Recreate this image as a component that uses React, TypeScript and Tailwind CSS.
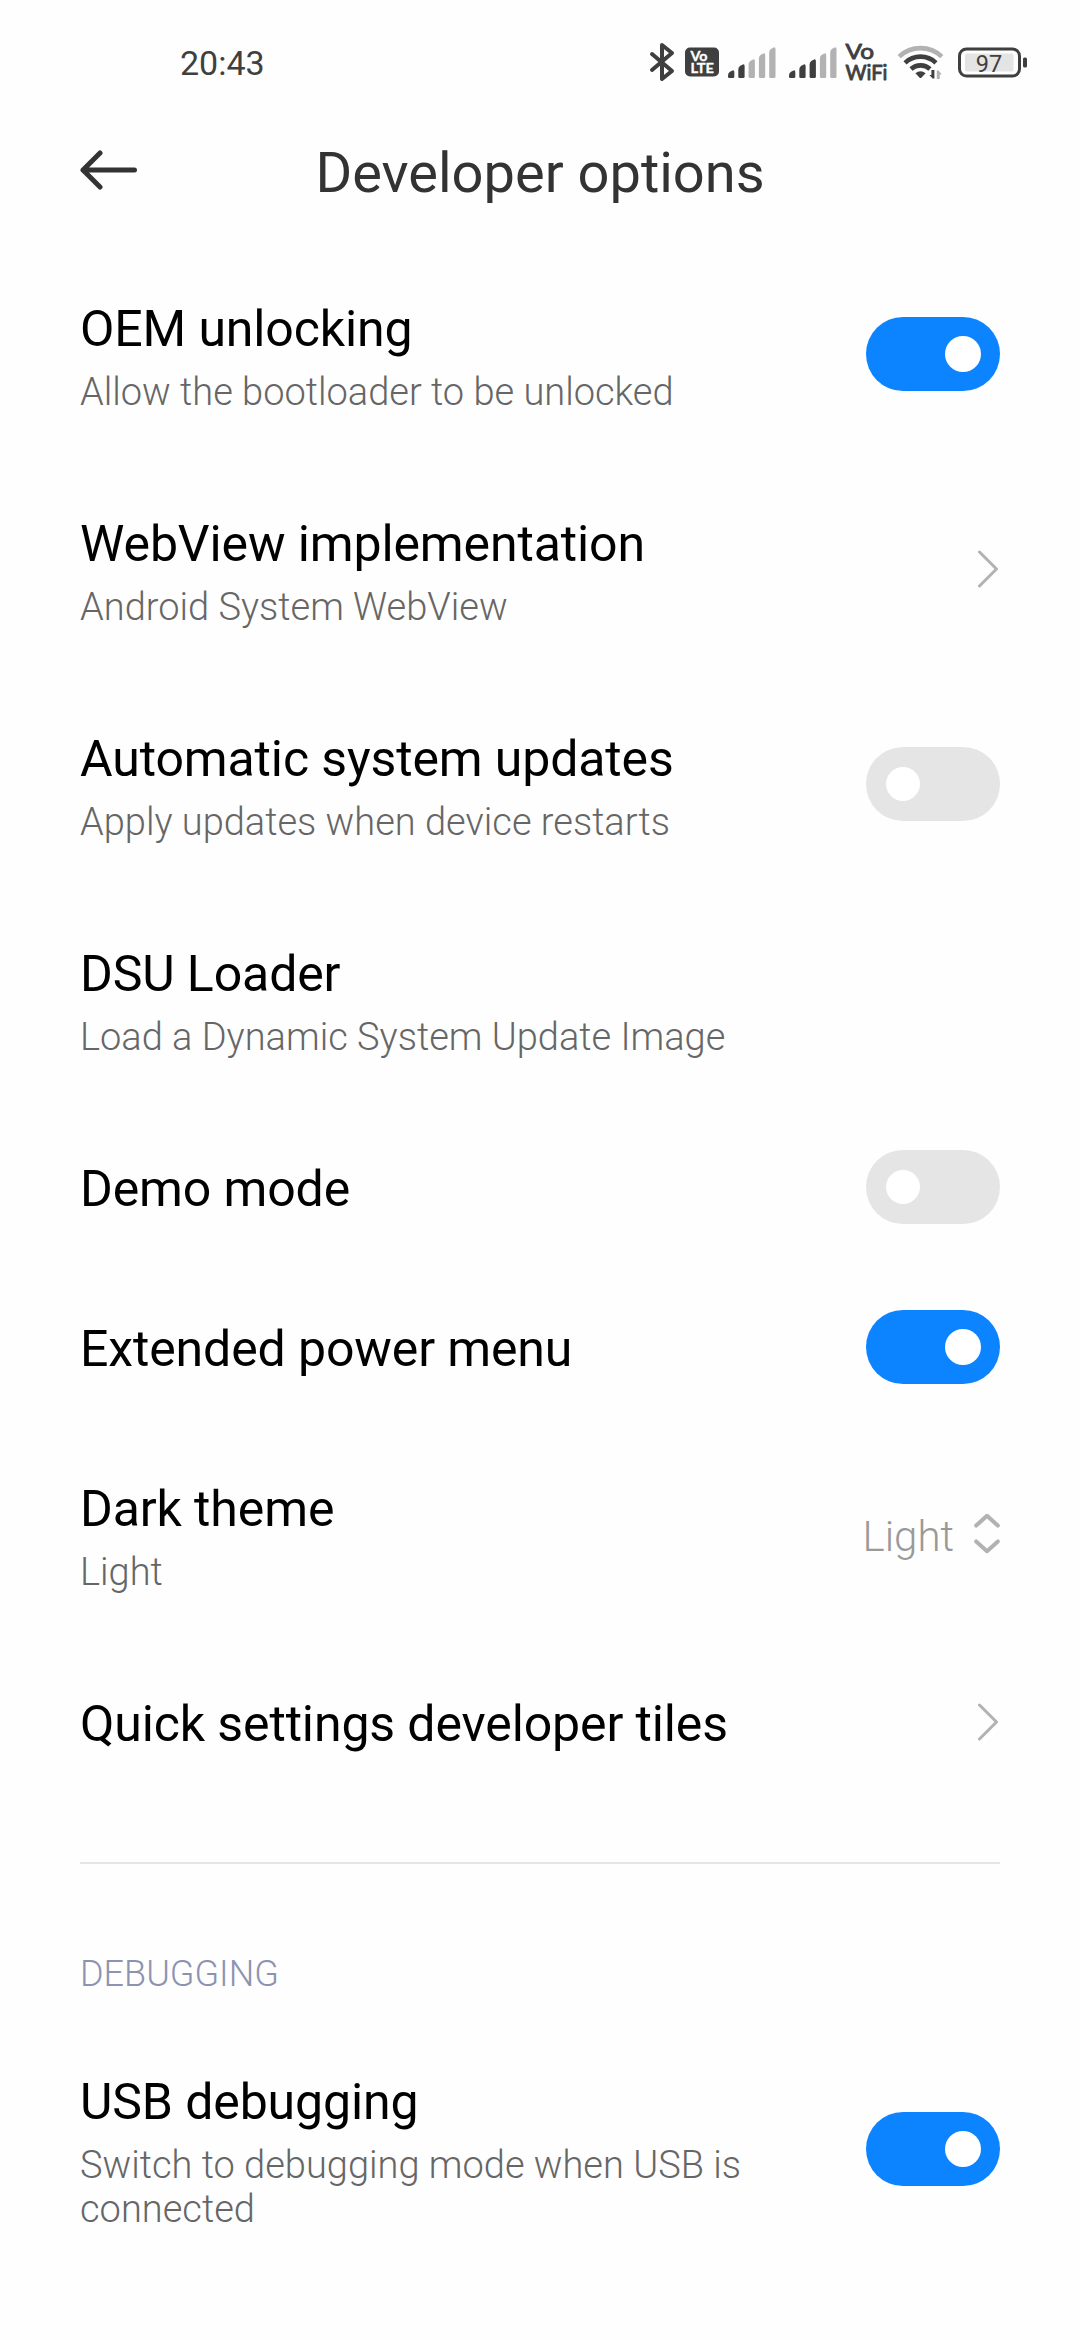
import type { ReactNode } from "react";

function BluetoothIcon() {
  return (
    <svg width="26" height="40" viewBox="0 0 26 40" fill="none" stroke="#3f3f3f" strokeWidth="4" strokeLinecap="round" strokeLinejoin="round">
      <path d="M3 12L23 29L13 37V3L23 11L3 28" />
    </svg>
  );
}

function VolteIcon() {
  return (
    <svg width="34" height="30" viewBox="0 0 34 30" overflow="visible">
      <rect y="0.5" width="34" height="29" rx="5" fill="#3f3f3f" />
      <g fill="#fff" stroke="#fff" strokeWidth="0.3" fontFamily="Lato, sans-serif" fontWeight="700">
        <text x="5.5" y="13.8" fontSize="12.5" textLength="17" lengthAdjust="spacingAndGlyphs">Vo</text>
        <text x="5.5" y="26" fontSize="13" textLength="23.5" lengthAdjust="spacingAndGlyphs">LTE</text>
      </g>
    </svg>
  );
}

function SignalIcon({ level }: { level: number }) {
  const tops = [23, 17, 12, 6, 0];
  return (
    <svg width="48" height="31" viewBox="0 0 48 31">
      {tops.map((top, i) => {
        const x = i * 10.3;
        return (
          <path
            key={top}
            d={`M${x} 29.5V${top + 5.5}Q${x} ${top + 3} ${x + 2} ${top + 1.8}L${x + 4.6} ${top + 0.4}Q${x + 6.3} ${top} ${x + 6.3} ${top + 2}V29.5Q${x + 6.3} 31 ${x + 5} 31H${x + 1.3}Q${x} 31 ${x} 29.5Z`}
            fill={i < level ? "#3f3f3f" : "#b2b2b2"}
          />
        );
      })}
    </svg>
  );
}

function VoWifiIcon() {
  return (
    <svg width="42" height="40" viewBox="0 0 42 40" overflow="visible" fill="#3f3f3f" stroke="#3f3f3f" strokeWidth="0.9" strokeLinejoin="round" fontFamily="Lato, sans-serif" fontWeight="400">
      <text x="0.5" y="17.2" fontSize="22" textLength="28.5" lengthAdjust="spacingAndGlyphs">Vo</text>
      <text x="0.5" y="38.3" fontSize="20.5" textLength="42" lengthAdjust="spacingAndGlyphs">WiFi</text>
    </svg>
  );
}

function WifiIcon() {
  return (
    <svg width="48" height="36" viewBox="0 0 48 36" fill="none" strokeWidth="4.6">
      <path d="M2.2 12.6A31 31 0 0 1 44.8 12.6" stroke="#b2b2b2" />
      <path d="M8 18.8A22.6 22.6 0 0 1 39 18.8" stroke="#3f3f3f" />
      <path d="M14 25A14.2 14.2 0 0 1 33 25" stroke="#3f3f3f" />
      <path d="M18.4 29.2Q23.5 25.4 28.6 29.2L24.6 33.6Q23.5 34.6 22.4 33.6Z" fill="#3f3f3f" />
      <path d="M37.4 26V34.5H35.6L32.4 31H34.4V26Z" fill="#3f3f3f" />
      <path d="M39.8 35V26.5H41.6L44.8 30.4H42.8V35Z" fill="#b2b2b2" />
    </svg>
  );
}

function BatteryIcon() {
  return (
    <svg width="70" height="31" viewBox="0 0 70 31">
      <rect x="1.5" y="2" width="60" height="27" rx="7" fill="none" stroke="#3f3f3f" strokeWidth="3" />
      <rect x="7" y="6.5" width="48.5" height="18" rx="2" fill="#e4e4e4" />
      <rect x="65" y="10.5" width="4" height="10" rx="1.5" fill="#3f3f3f" />
      <text x="31" y="24.5" fontSize="23.5" textAnchor="middle" fill="#3f3f3f" fontFamily="Roboto, sans-serif">97</text>
    </svg>
  );
}

function Chevron() {
  return (
    <svg className="shrink-0" width="22" height="40" viewBox="0 0 22 40" fill="none" stroke="#b2b2b2" strokeWidth="3" strokeLinecap="round" strokeLinejoin="round">
      <path d="M1.5 3L18.5 20L1.5 37" />
    </svg>
  );
}

function UpDown() {
  return (
    <svg width="26" height="42" viewBox="0 0 26 42" fill="none" stroke="#b2b2b2" strokeWidth="4" strokeLinecap="round" strokeLinejoin="round">
      <path d="M2.2 12.6L13 2.8L23.8 12.6" />
      <path d="M2.2 28.4L13 38.2L23.8 28.4" />
    </svg>
  );
}

function Toggle({ on }: { on: boolean }) {
  return (
    <button
      role="switch"
      aria-checked={on}
      className={
        on
          ? "flex h-[74px] w-[134px] shrink-0 items-center justify-end rounded-full bg-[#0d84ff] pr-[19px]"
          : "flex h-[74px] w-[134px] shrink-0 items-center rounded-full bg-[#e5e5e5] pl-5"
      }
    >
      <span className={on ? "size-9 rounded-full bg-white" : "size-[34px] rounded-full bg-white"} />
    </button>
  );
}

function Row({ title, summary, children }: { title: string; summary?: string; children?: ReactNode }) {
  return (
    <div className={summary ? "flex items-center justify-between py-[47.5px]" : "flex h-[160px] items-center justify-between"}>
      <div className="w-[690px] whitespace-nowrap pt-[5px]">
        <div className="text-[50px] leading-[60px] tracking-[-0.12px] text-black">{title}</div>
        {summary && <div className="mt-[11px] whitespace-pre-line text-[38px] font-light leading-[44px] text-[#666]">{summary}</div>}
      </div>
      {children}
    </div>
  );
}

export default function App() {
  return (
    <div className="h-[2340px] w-[1080px] overflow-hidden bg-[#fefefe] font-[Roboto,sans-serif]">
      <header>
        <div className="flex h-[124px] items-center pl-[180px] pr-[52px]">
          <span className="pt-0.5 text-[34px] leading-10 text-[#3f3f3f]">20:43</span>
          <div className="ml-auto flex items-center">
            <BluetoothIcon />
            <div className="ml-2.5"><VolteIcon /></div>
            <div className="ml-[9px]"><SignalIcon level={2} /></div>
            <div className="ml-[13px]"><SignalIcon level={3} /></div>
            <div className="ml-2"><VoWifiIcon /></div>
            <div className="ml-2.5"><WifiIcon /></div>
            <div className="ml-[13px]"><BatteryIcon /></div>
          </div>
        </div>
        <div className="grid h-[122.5px] grid-cols-[160px_1fr_160px] items-start px-20">
          <svg className="mt-[25px]" width="58" height="42" viewBox="0 0 58 42" fill="none" stroke="#333" strokeWidth="5" strokeLinecap="round" strokeLinejoin="round">
            <path d="M20 4L3 21L20 38M3 21H54.5" />
          </svg>
          <h1 className="mt-[16px] whitespace-nowrap text-center text-[56px] leading-[66px] text-[#333]">Developer options</h1>
        </div>
      </header>
      <main className="px-20">
        <Row title="OEM unlocking" summary="Allow the bootloader to be unlocked"><Toggle on /></Row>
        <Row title="WebView implementation" summary="Android System WebView"><Chevron /></Row>
        <Row title="Automatic system updates" summary="Apply updates when device restarts"><Toggle on={false} /></Row>
        <Row title="DSU Loader" summary="Load a Dynamic System Update Image" />
        <Row title="Demo mode"><Toggle on={false} /></Row>
        <Row title="Extended power menu"><Toggle on /></Row>
        <Row title="Dark theme" summary="Light">
          <div className="flex items-center gap-5">
            <span className="pt-[5px] text-[42px] font-light leading-[50px] text-[#999]">Light</span>
            <UpDown />
          </div>
        </Row>
        <Row title="Quick settings developer tiles"><Chevron /></Row>
        <div className="mt-[60.5px] h-0.5 bg-[#e5e5e5]" />
        <h2 className="mt-[88px] text-[36px] font-light leading-[44px] text-[#8c93b0]">DEBUGGING</h2>
        <div className="mt-[23px]">
          <Row title="USB debugging" summary={"Switch to debugging mode when USB is\nconnected"}><Toggle on /></Row>
        </div>
      </main>
    </div>
  );
}
